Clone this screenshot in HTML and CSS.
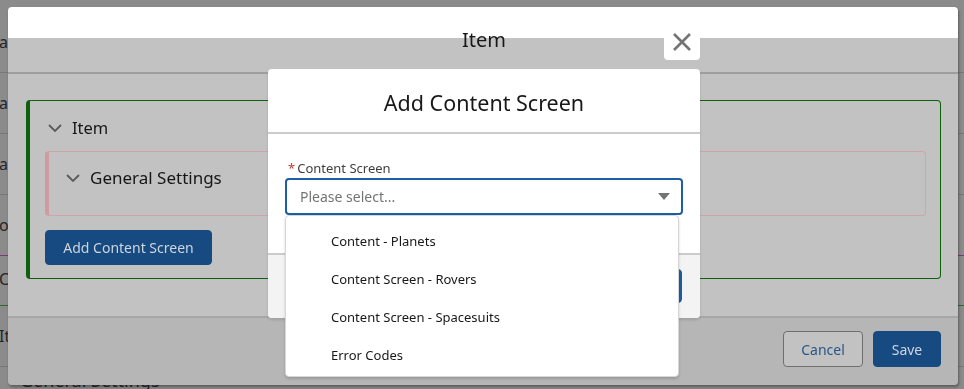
FILE: index.html
```html
<!DOCTYPE html>
<html lang="en">
<head>
    <meta charset="UTF-8">
    <title>Add Content Screen</title>
    <link rel="stylesheet" href="styles.css">
</head>
<body>
    <!-- stranka pod modaly -->
    <div class="page">
        <div class="ticks">
            <span class="tick"></span>
            <span class="tick blue"></span>
            <span class="tick"></span>
        </div>
        <div class="page-rows">
            <div class="page-row">at</div>
            <div class="page-row">at</div>
            <div class="page-row">at</div>
            <div class="page-row purple">or</div>
            <div class="page-row short green">C</div>
            <div class="page-row">It</div>
            <div class="page-foot">General Settings</div>
        </div>
        <div class="ticks bottom">
            <span class="tick"></span>
            <span class="tick green"></span>
            <span class="tick purple"></span>
            <span class="tick blue"></span>
            <span class="tick"></span>
        </div>
    </div>

    <!-- modal Item -->
    <div class="layer">
        <section class="modal">
            <header class="modal-head">
                <h2>Item</h2>
            </header>
            <div class="modal-body">
                <div class="card">
                    <div class="card-title">
                        <svg class="chevron" width="14" height="8" viewBox="0 0 14 8"><path d="M1 1l6 6 6-6" fill="none" stroke="#5b5b5b" stroke-width="1.8"/></svg>
                        Item
                    </div>
                    <div class="sub-section">
                        <div class="sub-title">
                            <svg class="chevron" width="14" height="8" viewBox="0 0 14 8"><path d="M1 1l6 6 6-6" fill="none" stroke="#5b5b5b" stroke-width="1.8"/></svg>
                            General Settings
                        </div>
                    </div>
                    <button class="btn brand">Add Content Screen</button>
                </div>
            </div>
            <footer class="modal-foot">
                <button class="btn neutral">Cancel</button>
                <button class="btn brand">Save</button>
            </footer>
        </section>
    </div>

    <!-- modal Add Content Screen -->
    <div class="layer top">
        <section class="dialog">
            <button class="close" title="Close">
                <svg width="20" height="20" viewBox="0 0 20 20"><path d="M2 2l16 16M18 2L2 18" stroke="#747474" stroke-width="2.6" fill="none"/></svg>
            </button>
            <header class="dialog-head">
                <h2>Add Content Screen</h2>
            </header>
            <div class="dialog-body">
                <label class="field-label"><abbr>*</abbr>Content Screen</label>
                <div class="combobox">
                    <div class="combo-input">
                        <span class="placeholder">Please select...</span>
                        <svg width="12" height="7" viewBox="0 0 12 7"><path d="M0 0h12L6 7z" fill="#747474"/></svg>
                    </div>
                    <ul class="listbox">
                        <li>Content - Planets</li>
                        <li>Content Screen - Rovers</li>
                        <li>Content Screen - Spacesuits</li>
                        <li>Error Codes</li>
                    </ul>
                </div>
            </div>
            <footer class="dialog-foot">
                <button class="btn blue">Save</button>
            </footer>
        </section>
    </div>
</body>
</html>
```

FILE: styles.css
```css
* {
    box-sizing: border-box;
}
body {
    margin: 0;
    height: 389px;
    overflow: hidden;
    background-color: #8b8b8b;
    font-family: 'Noto Sans', 'Open Sans', sans-serif;
    color: #181818;
}
h2 {
    margin: 0;
    font-size: 20px;
    font-weight: normal;
}
button {
    font-family: inherit;
    cursor: pointer;
}

/* stranka v pozadi */
.page {
    height: 100%;
    display: flex;
    flex-direction: column;
}
.ticks {
    height: 7px;
    display: flex;
    justify-content: flex-end;
    gap: 14px;
    padding-right: 53px;
}
.ticks.bottom {
    height: 4px;
}
.tick {
    width: 1px;
    background-color: #5f5f5f;
}
.tick.blue { background-color: #1010c0; }
.tick.green { background-color: #137013; }
.tick.purple { background-color: #7a1a7a; }
.page-rows {
    flex: 1;
    padding-top: 12px;
}
.page-row {
    height: 61px;
    line-height: 60px;
    margin-left: -1px;
    font-size: 16px;
    color: #262626;
    border-bottom: 1px solid #787878;
}
.page-row.purple { border-bottom-color: #7a3a7a; }
.page-row.short { height: 50px; line-height: 46px; }
.page-row.green { border-bottom-color: #2f6a2f; }
.page-foot {
    padding: 1px 0 0 20px;
    font-size: 18px;
    color: #262626;
}

/* vrstvy modalu */
.layer {
    position: fixed;
    inset: 0;
}
.layer.top {
    display: flex;
    justify-content: center;
    padding: 69px 0 0 4px;
}

/* modal Item */
.modal {
    margin: 7px 0 0 8px;
    width: 950px;
    height: 378px;
    display: flex;
    flex-direction: column;
    border-radius: 4px;
    box-shadow: 1px 2px 3px rgba(0, 0, 0, 0.35);
}
.modal-head {
    height: 67px;
    display: flex;
    align-items: center;
    justify-content: center;
    padding-left: 2px;
    border-radius: 4px 4px 0 0;
    border-bottom: 2px solid #9e9e9e;
    background: linear-gradient(#fff 31px, #c2c2c2 31px);
}
.modal-body {
    flex: 1;
    padding: 26px 17px 0 18px;
    background-color: #c2c2c2;
}
.card {
    border: 1px solid #0c610c;
    border-left-width: 4px;
    border-radius: 4px;
    padding: 15px 14px 13px 15px;
}
.card-title {
    display: flex;
    align-items: center;
    gap: 10px;
    padding-left: 3px;
    line-height: 24px;
    font-size: 16.5px;
    color: #161616;
}
.sub-section {
    margin-top: 11px;
    height: 65px;
    border: 1px solid #cfa5aa;
    border-left: 4px solid #cf9aa1;
    border-radius: 4px;
    padding: 14px 0 0 17px;
}
.sub-title {
    display: flex;
    align-items: center;
    gap: 10px;
    line-height: 24px;
    font-size: 17px;
    color: #161616;
}
.chevron {
    flex-shrink: 0;
}
.btn {
    height: 35px;
    padding: 0 12px;
    font-size: 14px;
    border-radius: 4px;
}
.card .btn {
    margin-top: 14px;
    width: 167px;
}
.btn.brand {
    background-color: #164a80;
    border: 1px solid #164a80;
    color: #cdd5df;
}
.btn.neutral {
    background-color: #c2c2c2;
    border: 1px solid #6f6f6f;
    color: #27568a;
}
.modal-foot {
    height: 69px;
    display: flex;
    justify-content: flex-end;
    align-items: flex-start;
    gap: 10px;
    padding: 13px 17px 0 0;
    border-top: 2px solid #a6a6a6;
    border-radius: 0 0 4px 4px;
    background-color: #b6b6b6;
}
.modal-foot .btn {
    height: 36px;
}
.modal-foot .neutral {
    width: 80px;
}
.modal-foot .brand {
    width: 68px;
}

/* modal Add Content Screen */
.dialog {
    position: relative;
    width: 432px;
    height: 249px;
    display: flex;
    flex-direction: column;
    background-color: #fff;
    border-radius: 4px;
    box-shadow: 0 2px 3px rgba(0, 0, 0, 0.12);
}
.close {
    position: absolute;
    top: -45px;
    right: 0;
    width: 36px;
    height: 36px;
    padding: 0;
    display: flex;
    align-items: center;
    justify-content: center;
    background-color: #fff;
    border: none;
    border-radius: 4px;
}
.dialog-head {
    height: 65px;
    display: flex;
    align-items: center;
    justify-content: center;
    padding-top: 3px;
    border-bottom: 2px solid #cbcbcb;
}
.dialog-head h2 {
    font-size: 21.5px;
}
.dialog-body {
    padding: 25px 17px 38px;
}
.field-label {
    display: block;
    height: 19px;
    font-size: 13px;
    line-height: 18px;
    color: #3e3e3c;
    padding-left: 3px;
}
.field-label abbr {
    color: #c23934;
    margin-right: 2px;
    text-decoration: none;
}
.combobox {
    position: relative;
}
.combo-input {
    height: 37px;
    display: flex;
    align-items: center;
    justify-content: space-between;
    padding: 0 11px 0 13px;
    border: 2px solid #1d5ea6;
    border-radius: 4px;
}
.placeholder {
    font-size: 14px;
    color: #747474;
}
.listbox {
    position: absolute;
    top: 100%;
    left: 0;
    width: 394px;
    margin: 0;
    padding: 6px 0 2px;
    list-style: none;
    background-color: #fff;
    border: 1px solid #d6d6d6;
    border-radius: 4px;
    box-shadow: 0 2px 3px rgba(0, 0, 0, 0.16);
    z-index: 2;
}
.listbox li {
    height: 38px;
    line-height: 38px;
    padding-left: 45px;
    font-size: 13px;
    color: #181818;
}
.dialog-foot {
    flex: 1;
    display: flex;
    justify-content: flex-end;
    padding: 14px 18px 0 0;
    border-top: 2px solid #cbcbcb;
    border-radius: 0 0 4px 4px;
    background-color: #f3f3f3;
}
.btn.blue {
    height: 34px;
    padding: 0 19px;
    background-color: #1b5ea6;
    border: 1px solid #1b5ea6;
    color: #fff;
}
```
